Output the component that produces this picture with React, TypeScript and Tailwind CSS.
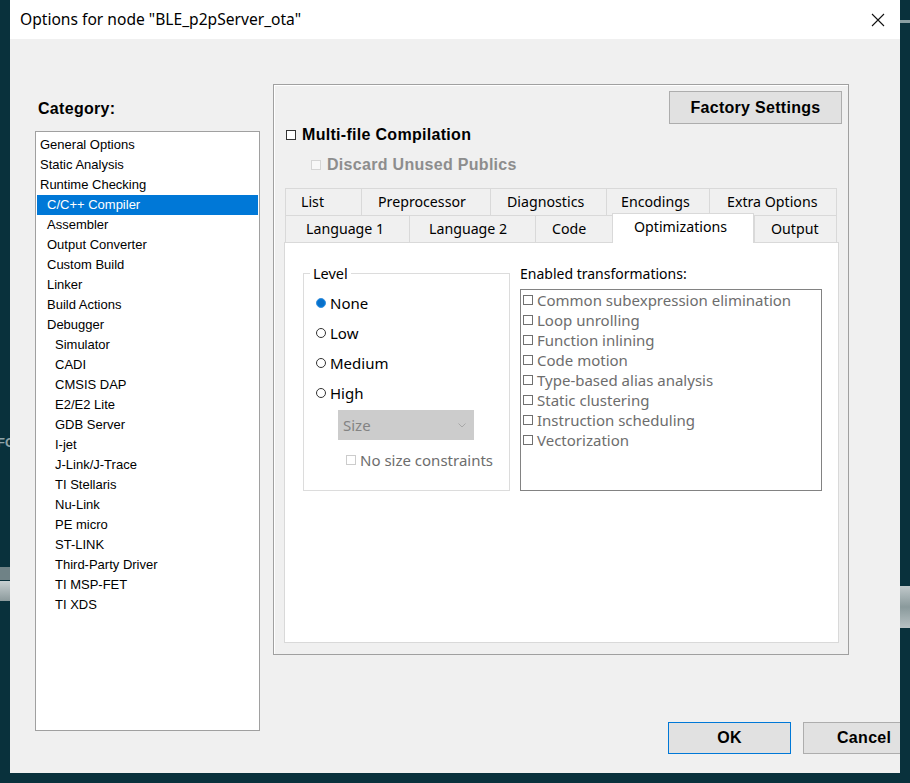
import React from "react";

const SANS = "font-['Noto_Sans',sans-serif]";
const ARIAL = "font-['Liberation_Sans',Arial,sans-serif]";

type Cat = { label: string; lvl: number; sel?: boolean };
const cats: Cat[] = [
  { label: "General Options", lvl: 0 },
  { label: "Static Analysis", lvl: 0 },
  { label: "Runtime Checking", lvl: 0 },
  { label: "C/C++ Compiler", lvl: 1, sel: true },
  { label: "Assembler", lvl: 1 },
  { label: "Output Converter", lvl: 1 },
  { label: "Custom Build", lvl: 1 },
  { label: "Linker", lvl: 1 },
  { label: "Build Actions", lvl: 1 },
  { label: "Debugger", lvl: 1 },
  { label: "Simulator", lvl: 2 },
  { label: "CADI", lvl: 2 },
  { label: "CMSIS DAP", lvl: 2 },
  { label: "E2/E2 Lite", lvl: 2 },
  { label: "GDB Server", lvl: 2 },
  { label: "I-jet", lvl: 2 },
  { label: "J-Link/J-Trace", lvl: 2 },
  { label: "TI Stellaris", lvl: 2 },
  { label: "Nu-Link", lvl: 2 },
  { label: "PE micro", lvl: 2 },
  { label: "ST-LINK", lvl: 2 },
  { label: "Third-Party Driver", lvl: 2 },
  { label: "TI MSP-FET", lvl: 2 },
  { label: "TI XDS", lvl: 2 },
];

const transforms = [
  "Common subexpression elimination",
  "Loop unrolling",
  "Function inlining",
  "Code motion",
  "Type-based alias analysis",
  "Static clustering",
  "Instruction scheduling",
  "Vectorization",
];

function Radio({ on }: { on?: boolean }) {
  return on ? (
    <span className="w-[10px] h-[10px] rounded-full border border-[#3d8fdb] bg-[#0078d7] flex items-center justify-center shrink-0">
      <span className="w-[6px] h-[6px] rounded-full bg-[#0a6fc7]" />
    </span>
  ) : (
    <span className="w-[10px] h-[10px] rounded-full border border-[#333333] bg-white shrink-0" />
  );
}

export default function App() {
  return (
    <div className="w-[910px] h-[783px] bg-[#09313c] relative overflow-hidden">
      {/* desktop remnants behind the dialog */}
      <div className={`absolute left-0 top-[436px] text-[13px] font-bold text-[#8fa3a8] ${ARIAL} leading-none -ml-[3px]`}>FG</div>
      <div className="absolute left-0 top-[567px] w-[10px] h-[13px] bg-[#6f8286]" />
      <div className="absolute left-0 top-[581px] w-[10px] h-[20px] bg-gradient-to-b from-[#c8d0d2] to-[#8c9a9c]" />
      <div className="absolute right-0 top-[20px] w-[10px] h-[3px] bg-[#8a9ea2]" />
      <div className="absolute right-0 top-[586px] w-[10px] h-[42px] bg-gradient-to-b from-[#c0c8ca] via-[#8a9a9c] to-[#b8c2c4]" />

      <div className="ml-[10px] w-[890px] h-[773px] flex flex-col bg-[#f0f0f0] overflow-hidden relative">
        {/* title bar */}
        <div className="h-[39px] bg-white flex items-center pl-[10px] pr-[14px] shrink-0">
          <span className={`${SANS} text-[15.6px] text-black`}>Options for node "BLE_p2pServer_ota"</span>
          <div className="flex-1" />
          <svg width="14" height="14" viewBox="0 0 14 14" className="mr-[1px]">
            <path d="M1 1 L13 13 M13 1 L1 13" stroke="#111" strokeWidth="1.1" />
          </svg>
        </div>

        {/* body */}
        <div className="flex flex-row pl-[25px] flex-1">
          {/* left column */}
          <div className="w-[225px] flex flex-col shrink-0">
            <div className={`mt-[60px] h-[20px] pl-[3px] flex items-center ${ARIAL} font-bold text-[16px] tracking-[0.3px] text-black`}>
              Category:
            </div>
            <div className="mt-[12px] h-[600px] bg-white border border-[#a0a0a0] pt-[3px] flex flex-col">
              {cats.map((c) => (
                <div
                  key={c.label}
                  className={`h-[20px] mx-[1px] flex items-center ${ARIAL} text-[13px] ${
                    c.sel ? "bg-[#0078d7] text-white" : "text-black"
                  } ${c.lvl === 0 ? "pl-[3px]" : c.lvl === 1 ? "pl-[10px]" : "pl-[18px]"}`}
                >
                  {c.label}
                </div>
              ))}
            </div>
          </div>

          {/* right column */}
          <div className="ml-[13px] flex flex-col shrink-0">
            <div className="mt-[45px] w-[576px] h-[571px] border border-[#a0a0a0] shadow-[inset_1px_1px_0_#ffffff] flex flex-col">
              <div className="flex justify-end mt-[6px] mr-[6px]">
                <button className={`w-[173px] h-[33px] bg-[#e1e1e1] border border-[#adadad] ${ARIAL} font-bold text-[16px] tracking-[0.3px] text-black`}>
                  Factory Settings
                </button>
              </div>
              <div className="mt-[1px] h-[20px] flex items-center pl-[12px]">
                <span className="w-[10px] h-[10px] border border-[#333333] bg-white shrink-0" />
                <span className={`ml-[6px] ${ARIAL} font-bold text-[16px] tracking-[0.3px] text-black`}>Multi-file Compilation</span>
              </div>
              <div className="mt-[10px] h-[20px] flex items-center pl-[37px]">
                <span className="w-[10px] h-[10px] border border-[#d4d4d4] bg-[#f7f7f7] shrink-0" />
                <span className={`ml-[6px] ${ARIAL} font-bold text-[16px] tracking-[0.3px] text-[#8d8d8d]`}>Discard Unused Publics</span>
              </div>

              {/* tabs */}
              <div className="mt-[13px] ml-[10px] w-[555px] flex flex-col">
                <div className={`ml-[1px] h-[27px] flex ${SANS} text-[14.2px] text-black`}>
                  {[
                    ["List", 76, 15],
                    ["Preprocessor", 129, 16],
                    ["Diagnostics", 116, 16],
                    ["Encodings", 103, 14],
                    ["Extra Options", 128, 17],
                  ].map(([t, w, p], i) => (
                    <div
                      key={t as string}
                      style={{ width: w as number, paddingLeft: p as number }}
                      className={`h-[27px] bg-[#f0f0f0] border-t border-l border-[#d9d9d9] flex items-center ${i === 4 ? "border-r" : ""}`}
                    >
                      {t}
                    </div>
                  ))}
                </div>
                <div className={`ml-[1px] h-[27px] flex items-start ${SANS} text-[14.2px] text-black`}>
                  {[
                    ["Language 1", 124, 20],
                    ["Language 2", 126, 19],
                    ["Code", 77, 16],
                    ["Optimizations", 142, 21],
                    ["Output", 83, 16],
                  ].map(([t, w, p], i) =>
                    i === 3 ? (
                      <div
                        key={t as string}
                        style={{ width: w as number, paddingLeft: p as number }}
                        className="relative z-10 -mt-[2px] h-[30px] bg-white border-t border-l border-r border-[#d9d9d9] flex items-start pt-[2px]"
                      >
                        {t}
                      </div>
                    ) : (
                      <div
                        key={t as string}
                        style={{ width: w as number, paddingLeft: p as number }}
                        className={`h-[27px] bg-[#f0f0f0] border-t border-l border-[#d9d9d9] flex items-center ${i === 4 ? "border-r" : ""}`}
                      >
                        {t}
                      </div>
                    )
                  )}
                </div>
                <div className="h-[401px] bg-white border border-[#d9d9d9] flex flex-row items-start">
                  {/* Level group */}
                  <div className="ml-[18px] mt-[30px] w-[207px] h-[218px] border border-[#dcdcdc] flex flex-col relative">
                    <span className={`absolute -top-[11px] left-[6px] px-[3px] bg-white ${SANS} text-[14.5px] leading-[20px] text-black`}>Level</span>
                    <div className={`flex flex-col pl-[12px] mt-[19px] ${SANS} text-[15px] text-black`}>
                      {["None", "Low", "Medium", "High"].map((l, i) => (
                        <div key={l} className={`h-[20px] flex items-center ${i > 0 ? "mt-[10px]" : ""}`}>
                          <Radio on={i === 0} />
                          <span className="ml-[4px]">{l}</span>
                        </div>
                      ))}
                    </div>
                    <div className={`mt-[7px] ml-[34px] w-[136px] h-[30px] bg-[#cccccc] flex items-center pl-[5px] pr-[8px] ${SANS} text-[15px] text-[#838383]`}>
                      <span>Size</span>
                      <div className="flex-1" />
                      <svg width="8" height="5" viewBox="0 0 8 5">
                        <path d="M0.5 0.5 L4 4 L7.5 0.5" fill="none" stroke="#a8a8a8" strokeWidth="1" />
                      </svg>
                    </div>
                    <div className={`mt-[10px] h-[20px] pl-[42px] flex items-center ${SANS} text-[15px] text-[#6d6d6d]`}>
                      <span className="w-[10px] h-[10px] border border-[#cccccc] bg-white shrink-0" />
                      <span className="ml-[4px]">No size constraints</span>
                    </div>
                  </div>

                  {/* Enabled transformations */}
                  <div className="ml-[10px] mt-[20px] flex flex-col">
                    <div className={`h-[20px] flex items-center ${SANS} text-[14px] text-black`}>Enabled transformations:</div>
                    <div className="mt-[6px] w-[302px] h-[202px] border border-[#828282] bg-white flex flex-col">
                      {transforms.map((t) => (
                        <div key={t} className={`h-[20px] pl-[2px] flex items-center ${SANS} text-[15px] text-[#6d6d6d]`}>
                          <span className="w-[10px] h-[10px] border border-[#707070] bg-white shrink-0" />
                          <span className="ml-[4px]">{t}</span>
                        </div>
                      ))}
                    </div>
                  </div>
                </div>
              </div>
            </div>

            {/* bottom buttons */}
            <div className="mt-[67px] ml-[395px] flex flex-row">
              <button className={`w-[123px] h-[32px] shrink-0 bg-[#e1e1e1] border border-[#0078d7] ${ARIAL} font-bold text-[16px] tracking-[0.3px] text-black`}>
                OK
              </button>
              <button className={`ml-[12px] w-[123px] h-[32px] shrink-0 bg-[#e1e1e1] border border-[#adadad] ${ARIAL} font-bold text-[16px] tracking-[0.3px] text-black text-left pl-[33px]`}>
                Cancel
              </button>
            </div>
          </div>
        </div>
      </div>
    </div>
  );
}
